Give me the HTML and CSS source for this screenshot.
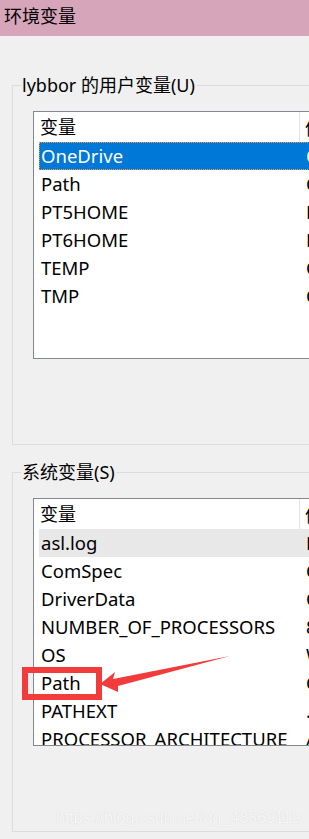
FILE: index.html
```html
<!DOCTYPE html>
<html lang="zh-CN">
<head>
    <meta charset="UTF-8">
    <meta name="viewport" content="width=device-width, initial-scale=1.0">
    <title>环境变量</title>
    <link rel="stylesheet" href="styles.css">
</head>
<body>
    <div class="title-bar">环境变量</div>

    <div class="dialog">
        <fieldset class="group">
            <legend>lybbor 的用户变量(U)</legend>
            <div class="list">
                <div class="list-header">
                    <span class="col-name">变量</span>
                    <span class="col-value">值</span>
                </div>
                <div class="row selected"><span class="name">OneDrive</span><span class="value">C:\Users\lybbor\OneDrive</span></div>
                <div class="row"><span class="name">Path</span><span class="value">C:\Users\lybbor\AppData</span></div>
                <div class="row"><span class="name">PT5HOME</span><span class="value">D:\Cisco Packet Tracer</span></div>
                <div class="row"><span class="name">PT6HOME</span><span class="value">D:\Cisco Packet Tracer</span></div>
                <div class="row"><span class="name">TEMP</span><span class="value">C:\Users\lybbor\AppData</span></div>
                <div class="row"><span class="name">TMP</span><span class="value">C:\Users\lybbor\AppData</span></div>
            </div>
        </fieldset>

        <fieldset class="group">
            <legend>系统变量(S)</legend>
            <div class="list">
                <div class="list-header">
                    <span class="col-name">变量</span>
                    <span class="col-value">值</span>
                </div>
                <div class="row hover"><span class="name">asl.log</span><span class="value">Destination=file</span></div>
                <div class="row"><span class="name">ComSpec</span><span class="value">C:\Windows\system32</span></div>
                <div class="row"><span class="name">DriverData</span><span class="value">C:\Windows\System32</span></div>
                <div class="row"><span class="name">NUMBER_OF_PROCESSORS</span><span class="value">8</span></div>
                <div class="row"><span class="name">OS</span><span class="value">Windows_NT</span></div>
                <div class="row"><span class="name">Path</span><span class="value">C:\Program Files</span></div>
                <div class="row"><span class="name">PATHEXT</span><span class="value">.COM;.EXE;.BAT</span></div>
                <div class="row"><span class="name">PROCESSOR_ARCHITECTURE</span><span class="value">AMD64</span></div>
            </div>
        </fieldset>
    </div>

    <!-- annotation drawn over the screenshot -->
    <svg class="annotation" width="309" height="839" viewBox="0 0 309 839">
        <rect x="25" y="670" width="74" height="27" fill="none" stroke="#f23b3b" stroke-width="6"/>
        <polygon points="100,684 115,672 113,679 230,656 118,686 118,692" fill="#f23b3b"/>
    </svg>

    <div class="watermark">https://blog.csdn.net/qq_43569119</div>
</body>
</html>
```

FILE: styles.css
```css
/* Fenêtre */
body {
    margin: 0;
    width: 309px;
    height: 839px;
    overflow: hidden;
    background-color: #f0f0f0;
    font-family: "Noto Sans", "Noto Sans CJK SC", sans-serif;
    color: #000;
    position: relative;
}

.title-bar {
    height: 36px;
    background-color: #d7a5b9;
    font-family: "Noto Sans CJK SC", sans-serif;
    font-size: 18px;
    line-height: 30px;
    padding-left: 4px;
}

.dialog {
    width: 420px;
    padding: 37px 0 0 12px;
}

/* Groupes */
.group {
    margin: 0 0 15px 0;
    padding: 14px 20px 85px 20px;
    border: 1px solid #dcdcdc;
}

.group legend {
    font-size: 18px;
    line-height: 24px;
    padding: 0 1px;
    margin-left: -12px;
    font-family: "Noto Sans", "Noto Sans CJK SC", sans-serif;
}

/* Listes */
.list {
    height: 246px;
    border: 1px solid #828790;
    background-color: #fff;
    overflow: hidden;
}

.list-header {
    display: flex;
    height: 30px;
    align-items: center;
    font-size: 18px;
}

.col-name {
    width: 259px;
    padding-left: 6px;
    height: 100%;
    line-height: 28px;
    border-right: 1px solid #e5e5e5;
    font-family: "Noto Sans CJK SC", sans-serif;
}

.col-value {
    padding-left: 5px;
    font-family: "Noto Sans CJK SC", sans-serif;
}

.row {
    display: flex;
    height: 28px;
    line-height: 28px;
    margin-left: 5px;
    font-size: 18.5px;
    white-space: nowrap;
}

.row .name {
    width: 265px;
    flex-shrink: 0;
    padding-left: 2px;
}

.row.selected {
    background-color: #0078d7;
    color: #fff;
    outline: 1px dotted #f0a030;
    outline-offset: -1px;
}

.row.hover {
    background-color: #e8e8e8;
}

/* Annotations */
.annotation {
    position: absolute;
    left: 0;
    top: 0;
}

.watermark {
    position: absolute;
    left: 56px;
    top: 809px;
    font-family: "Liberation Sans", sans-serif;
    font-size: 16px;
    color: rgba(255, 255, 255, 0.85);
    text-shadow: 0 0 1px rgba(0, 0, 0, 0.15);
}
```
